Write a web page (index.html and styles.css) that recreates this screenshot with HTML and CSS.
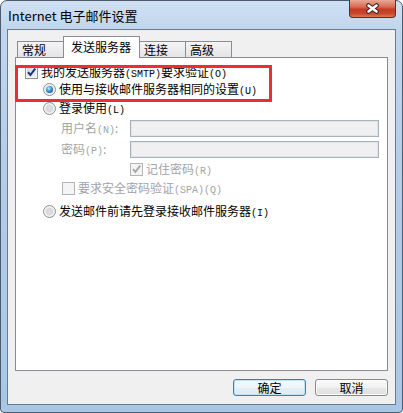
FILE: index.html
```html
<!DOCTYPE html>
<html lang="zh-CN">
<head>
<meta charset="utf-8">
<title>Internet 电子邮件设置</title>
<link rel="stylesheet" href="styles.css">
</head>
<body>
<div class="window">
  <div class="titlebar">
    <span class="title">Internet 电子邮件设置</span>
    <div class="close">
      <svg width="15" height="11" viewBox="0 0 15 11">
        <path d="M3.5 2.5 L11.5 8.5 M11.5 2.5 L3.5 8.5" stroke="#3a2420" stroke-width="4.6" stroke-linecap="round" fill="none"/>
        <path d="M3.5 2.5 L11.5 8.5 M11.5 2.5 L3.5 8.5" stroke="#ffffff" stroke-width="2.6" stroke-linecap="round" fill="none"/>
      </svg>
    </div>
  </div>
  <div class="client">
    <div class="tabs">
      <div class="tab">常规</div>
      <div class="tab active">发送服务器</div>
      <div class="tab">连接</div>
      <div class="tab">高级</div>
    </div>
    <div class="panel">
      <div class="row r1">
        <span class="cb"><svg width="11" height="11" viewBox="0 0 11 11"><path d="M2 5.2 L4.4 8 L9.2 1.6" stroke="#1c2f78" stroke-width="2" fill="none"/></svg></span>
        <span>我的发送服务器<span class="a">(SMTP)</span>要求验证<span class="a">(O)</span></span>
      </div>
      <div class="row r2">
        <span class="rb on"><span class="dot"></span></span>
        <span>使用与接收邮件服务器相同的设置<span class="a">(U)</span></span>
      </div>
      <div class="row r3">
        <span class="rb"><span class="dot"></span></span>
        <span>登录使用<span class="a">(L)</span></span>
      </div>
      <div class="row field r4">
        <span class="flabel dis">用户名<span class="a">(N)</span>:</span>
        <span class="input"></span>
      </div>
      <div class="row field r5">
        <span class="flabel dis">密码<span class="a">(P)</span>:</span>
        <span class="input"></span>
      </div>
      <div class="row r6">
        <span class="cb dcb"><svg width="11" height="11" viewBox="0 0 11 11"><path d="M2 5.2 L4.4 8 L9.2 1.6" stroke="#a8a8a8" stroke-width="2" fill="none"/></svg></span>
        <span class="dis">记住密码<span class="a">(R)</span></span>
      </div>
      <div class="row r7">
        <span class="cb dcb"></span>
        <span class="dis">要求安全密码验证<span class="a">(SPA)(Q)</span></span>
      </div>
      <div class="row r8">
        <span class="rb"><span class="dot"></span></span>
        <span>发送邮件前请先登录接收邮件服务器<span class="a">(I)</span></span>
      </div>
      <div class="highlight"></div>
    </div>
    <div class="buttons">
      <div class="btn default">确定</div>
      <div class="btn">取消</div>
    </div>
  </div>
</div>
</body>
</html>
```

FILE: styles.css
```css
html, body {
  margin: 0;
  padding: 0;
  background: #ffffff;
}
body {
  font-family: "Noto Sans CJK SC", "Noto Sans", sans-serif;
  font-size: 12px;
  color: #000;
}
.window {
  width: 403px;
  height: 413px;
  box-sizing: border-box;
  border: 1px solid #4d5b6b;
  border-radius: 7px 7px 4px 4px;
  padding: 0 6px 7px;
  background: linear-gradient(180deg, #d0e0f2 0%, #c0d6ee 7%, #b3cdea 40%, #a8c7e7 100%);
  display: flex;
  flex-direction: column;
}
.titlebar {
  height: 28px;
  display: flex;
  justify-content: space-between;
  align-items: flex-start;
}
.title {
  padding-left: 1px;
  line-height: 29px;
  font-size: 13px;
  color: #000;
}
.close {
  width: 47px;
  height: 18px;
  margin-top: -1px;
  box-sizing: border-box;
  border: 1px solid #6a2a20;
  border-top: none;
  border-radius: 0 0 4px 4px;
  background: linear-gradient(180deg, #e9a796 0%, #d86c55 40%, #c23b24 55%, #c9482c 80%, #dd7656 100%);
  display: flex;
  align-items: center;
  justify-content: center;
}
.client {
  flex: 1;
  border: 1px solid #6d7a89;
  background: #f0f0f0;
  padding: 6px 7px 8px;
  display: flex;
  flex-direction: column;
}
.tabs {
  display: flex;
  align-items: flex-end;
  height: 21px;
  padding-left: 2px;
  position: relative;
  z-index: 1;
}
.tab {
  height: 16px;
  width: 47px;
  box-sizing: border-box;
  border: 1px solid #898c95;
  border-bottom: none;
  background: linear-gradient(180deg, #f4f4f4, #e4e4e4);
  line-height: 15px;
  padding-left: 4px;
  margin-right: -1px;
}
.tab.active {
  height: 22px;
  width: 77px;
  background: #ffffff;
  margin-bottom: -1px;
  line-height: 19px;
  padding-left: 7px;
}
.panel {
  flex: 1;
  border: 1px solid #898c95;
  background: #ffffff;
  position: relative;
  padding: 7px 0 0 9px;
  display: flex;
  flex-direction: column;
}
.row {
  display: flex;
  align-items: center;
  height: 15px;
  line-height: 15px;
  white-space: nowrap;
}
.a {
  font-family: "Liberation Mono", "DejaVu Sans Mono", monospace;
  font-size: 10px;
}
.dis {
  color: #a3a3a3;
}
.cb, .rb {
  width: 13px;
  height: 13px;
  box-sizing: border-box;
  flex: none;
  margin-right: 3px;
  display: flex;
  align-items: center;
  justify-content: center;
}
.cb {
  border: 1px solid #8e8f8f;
  background: linear-gradient(135deg, #cfd3d9 0%, #f3f4f6 100%);
  box-shadow: inset 0 0 0 1px #f6f6f6;
}
.cb.dcb {
  border-color: #b4b4b4;
  background: #f4f4f4;
  box-shadow: none;
}
.rb {
  border: 1px solid #8e8f8f;
  border-radius: 50%;
  background: radial-gradient(circle at 50% 50%, #d4d6d8 0%, #f4f4f4 70%);
}
.rb .dot {
  width: 7px;
  height: 7px;
  border-radius: 50%;
  background: radial-gradient(circle at 50% 50%, #e0e2e4 0%, #cdd0d3 100%);
}
.rb.on .dot {
  background: radial-gradient(circle at 40% 35%, #c9f1ff 0%, #49a9e2 35%, #145d9f 75%, #0e4b84 100%);
}
.r2, .r3 {
  margin-left: 18px;
  margin-top: 2px;
}
.r3 {
  margin-top: 4px;
}
.field {
  height: 17px;
  line-height: 17px;
  margin-left: 36px;
  margin-top: 4px;
}
.r5 {
  margin-top: 4px;
}
.flabel {
  width: 69px;
}
.input {
  width: 249px;
  height: 17px;
  box-sizing: border-box;
  border: 1px solid #a9b0b8;
  box-shadow: inset 0 0 0 1px #dce6f0;
  background: #f0f0f0;
}
.r6 {
  margin-left: 105px;
  margin-top: 4px;
}
.r7 {
  margin-left: 37px;
  margin-top: 4px;
}
.r8 {
  margin-left: 18px;
  margin-top: 8px;
}
.highlight {
  position: absolute;
  left: -1px;
  top: 7px;
  width: 257px;
  height: 37px;
  box-sizing: border-box;
  border: 3px solid #ec2d33;
}
.buttons {
  display: flex;
  justify-content: flex-end;
  gap: 9px;
  margin-top: 8px;
  height: 17px;
}
.btn {
  width: 73px;
  height: 17px;
  box-sizing: border-box;
  border: 1px solid #8a8a8a;
  border-radius: 3px;
  background: linear-gradient(180deg, #fbfbfb 0%, #f1f1f1 50%, #e6e6e6 51%, #e2e2e2 100%);
  box-shadow: inset 0 0 0 1px #fafafa;
  text-align: center;
  line-height: 15px;
}
.btn.default {
  border-color: #3c7fb1;
  box-shadow: inset 0 0 0 1px #bde3f8;
  background: linear-gradient(180deg, #f4fafd 0%, #eef5f9 50%, #e3eef5 51%, #dfeaf1 100%);
}
```
